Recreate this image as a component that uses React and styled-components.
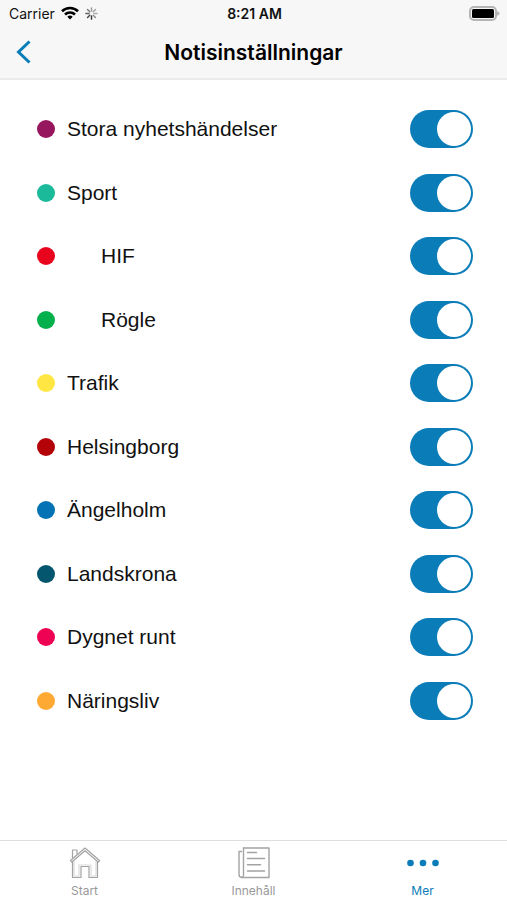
import React, { useState } from 'react'
import styled, { createGlobalStyle } from 'styled-components'

const topics = [
    { id: 'stora', label: 'Stora nyhetshändelser', color: '#97175f' },
    { id: 'sport', label: 'Sport', color: '#1aba9b' },
    { id: 'hif', label: 'HIF', color: '#e9041e', nested: true },
    { id: 'rogle', label: 'Rögle', color: '#04b04b', nested: true },
    { id: 'trafik', label: 'Trafik', color: '#ffe642' },
    { id: 'helsingborg', label: 'Helsingborg', color: '#b30309' },
    { id: 'angelholm', label: 'Ängelholm', color: '#0373b5' },
    { id: 'landskrona', label: 'Landskrona', color: '#03566e' },
    { id: 'dygnet', label: 'Dygnet runt', color: '#ee0354' },
    { id: 'naringsliv', label: 'Näringsliv', color: '#ffa935' },
];

const spokes = [0.9, 0.85, 0.7, 0.6, 0.45, 0.4, 0.35, 0.5];

function WifiIcon() {
    return (
        <svg width="18" height="14" viewBox="0 0 18 14" fill="none" stroke="#000" strokeWidth="2.6">
            <path d="M1 5.2a11.5 11.5 0 0 1 16 0" />
            <path d="M4 8.5a7.2 7.2 0 0 1 10 0" />
            <path d="M9 13.6 6.3 10.8a3.9 3.9 0 0 1 5.4 0z" fill="#000" stroke="none" />
        </svg>
    )
}

function SpinnerIcon() {
    return (
        <svg width="13" height="13" viewBox="0 0 12 12" stroke="#222" strokeWidth="1.3" strokeLinecap="round">
            {spokes.map((opacity, i) => (
                <path key={i} d="M6 8.2v3" opacity={opacity} transform={`rotate(${i * 45} 6 6)`} />
            ))}
        </svg>
    )
}

function BatteryIcon() {
    return (
        <svg width="31" height="15" viewBox="0 0 31 15">
            <rect x="1" y="1" width="26" height="13" rx="4" fill="#f7f7f7" stroke="#b5b5b5" strokeWidth="2" />
            <rect x="3" y="3" width="22" height="9" rx="1.5" fill="#000" />
            <path d="M28 5.2c1.7.5 2.6 1.3 2.6 2.3s-.9 1.8-2.6 2.3z" fill="#b5b5b5" />
        </svg>
    )
}

function BackIcon() {
    return (
        <svg width="16" height="24" viewBox="0 0 16 24" fill="none" stroke="#0a7cb8" strokeWidth="3">
            <path d="M13.5 1.5 2.5 12l11 10.5" />
        </svg>
    )
}

function HomeIcon() {
    return (
        <svg width="32" height="34" viewBox="0 0 32 34" fill="none" stroke="#a3a3a3" strokeWidth="1.2" strokeLinejoin="round">
            <path d="M1.5 14.5 16 2l14.5 12.5-1.3 1.5L16 4.8 2.8 16z" />
            <path d="M3.5 15.5v16h8.500v-11h8v11h8.500v-16" />
            <path d="M5 14.500v15.500h5v-11h12v11h5V14.500" opacity=".4" />
            <path d="M3.500 12V4h4.500v4" />
        </svg>
    )
}

function NewsIcon() {
    return (
        <svg width="32" height="34" viewBox="0 0 32 34" fill="none" stroke="#a3a3a3" strokeWidth="1.4" strokeLinecap="round" strokeLinejoin="round">
            <path d="M5.500 2h25.500v29.500H4a3 3 0 0 1-3-3V5.500h2.500" />
            <path d="M5.500 2v26.500a2.500 2.500 0 0 1-2 3" />
            <path d="M9.500 6.500h9M9.500 12.500h17M9.500 18.800h13M9.500 25h17" strokeWidth="1.6" />
        </svg>
    )
}

function MoreIcon() {
    return (
        <svg width="32" height="34" viewBox="0 0 32 34" fill="#0a7cb8">
            <circle cx="3.5" cy="17" r="3.3" />
            <circle cx="16" cy="17" r="3.3" />
            <circle cx="28.5" cy="17" r="3.3" />
        </svg>
    )
}

function App() {
    const [enabled, setEnabled] = useState(() => topics.map((topic) => topic.id));

    const toggle = (id) => {
        setEnabled(enabled.includes(id) ? enabled.filter((item) => item !== id) : [...enabled, id]);
    };

    return (
        <Screen>
            <GlobalStyle />
            <Header>
                <StatusBar>
                    <Carrier>
                        Carrier
                        <WifiIcon />
                        <SpinnerIcon />
                    </Carrier>
                    <Clock>8:21 AM</Clock>
                    <Battery><BatteryIcon /></Battery>
                </StatusBar>
                <NavBar>
                    <BackButton type="button" aria-label="Tillbaka"><BackIcon /></BackButton>
                    <Title>Notisinställningar</Title>
                </NavBar>
            </Header>
            <TopicList>
                {topics.map((topic) => (
                    <TopicRow key={topic.id}>
                        <Dot $color={topic.color} />
                        <TopicLabel htmlFor={topic.id} $nested={topic.nested}>{topic.label}</TopicLabel>
                        <Switch
                            id={topic.id}
                            type="checkbox"
                            role="switch"
                            checked={enabled.includes(topic.id)}
                            onChange={() => toggle(topic.id)}
                        />
                    </TopicRow>
                ))}
            </TopicList>
            <TabBar>
                <Tab href="#start"><HomeIcon />Start</Tab>
                <Tab href="#innehall"><NewsIcon />Innehåll</Tab>
                <Tab href="#mer" $active><MoreIcon />Mer</Tab>
            </TabBar>
        </Screen>
    )
}

const GlobalStyle = createGlobalStyle`
    * {
        box-sizing: border-box;
    }

    body {
        margin: 0;
        background: white;
        color: #111;
        font-family: Inter, "Liberation Sans", sans-serif;
    }

    svg {
        display: block;
        flex-shrink: 0;
    }
`;

const Screen = styled.div`
    min-height: 100vh;
    display: flex;
    flex-direction: column;
`;

const Header = styled.header`
    background: #f7f7f7;
    border-bottom: 2px solid #ebebeb;
`;

const StatusBar = styled.div`
    display: grid;
    grid-template-columns: 1fr auto 1fr;
    align-items: center;
    height: 26px;
    padding: 0 7px 0 9px;
    font-size: 14px;
`;

const Carrier = styled.div`
    display: flex;
    align-items: center;
    gap: 6px;
`;

const Clock = styled.span`
    font-weight: 600;
`;

const Battery = styled.div`
    justify-self: end;
`;

const NavBar = styled.div`
    display: grid;
    grid-template-columns: 1fr auto 1fr;
    align-items: center;
    height: 52px;
    padding: 0 16px;
`;

const BackButton = styled.button`
    justify-self: start;
    padding: 0;
    border: 0;
    background: none;
    cursor: pointer;
`;

const Title = styled.h1`
    margin: 0;
    color: #000;
    font-size: 21px;
    font-weight: 600;
`;

const TopicList = styled.ul`
    flex: 1;
    display: grid;
    grid-auto-rows: 64px 63px;
    align-content: start;
    margin: 0;
    padding: 17px 34px 17px 37px;
    list-style: none;
`;

const TopicRow = styled.li`
    display: flex;
    align-items: center;
    gap: 12px;
`;

const Dot = styled.span`
    width: 18px;
    height: 18px;
    border-radius: 50%;
    background: ${props => props.$color};
`;

const TopicLabel = styled.label`
    flex: 1;
    padding-left: ${props => props.$nested ? '34px' : '0'};
    font-family: "Liberation Sans", Arial, sans-serif;
    font-size: 21px;
`;

const Switch = styled.input`
    appearance: none;
    display: flex;
    width: 63px;
    height: 38px;
    margin: 0;
    padding: 2px;
    border-radius: 19px;
    background: ${props => props.checked ? '#0a7cb8' : '#ddd'};
    justify-content: ${props => props.checked ? 'flex-end' : 'flex-start'};
    cursor: pointer;

    &::before {
        content: '';
        width: 34px;
        height: 34px;
        border-radius: 50%;
        background: white;
    }
`;

const TabBar = styled.nav`
    display: grid;
    grid-template-columns: repeat(3, 1fr);
    height: 60px;
    border-top: 1px solid #dedede;
`;

const Tab = styled.a`
    display: flex;
    flex-direction: column;
    align-items: center;
    gap: 3px;
    padding-top: 5px;
    color: ${props => props.$active ? '#0a7cb8' : '#999'};
    font-size: 12px;
    line-height: 16px;
    text-decoration: none;
`;

export default App
